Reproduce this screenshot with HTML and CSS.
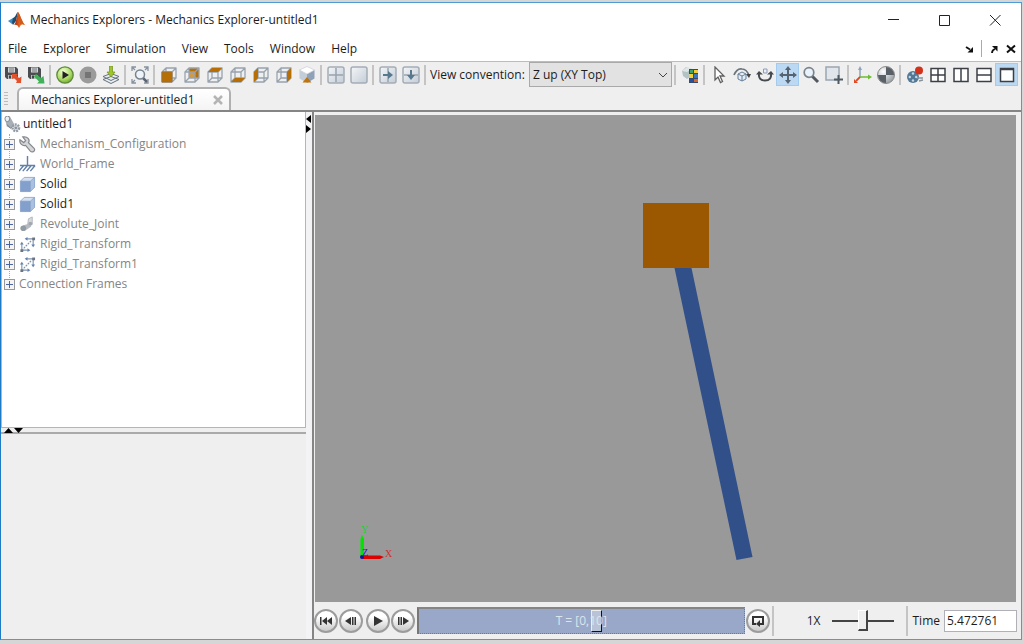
FILE: index.html
```html
<!DOCTYPE html>
<html lang="en">
<head>
<meta charset="utf-8">
<title>Mechanics Explorers - Mechanics Explorer-untitled1</title>
<link rel="stylesheet" href="styles.css">
</head>
<body>
<svg class="sprite" aria-hidden="true">
  <defs>
    <linearGradient id="g-blue" x1="0" y1="0" x2="1" y2="1"><stop offset="0" stop-color="#f4f6f8"/><stop offset="1" stop-color="#c3ccd6"/></linearGradient>
    <radialGradient id="g-green" cx=".4" cy=".3" r=".8"><stop offset="0" stop-color="#f4ffd8"/><stop offset=".6" stop-color="#a8d860"/><stop offset="1" stop-color="#5a9a20"/></radialGradient>
    <radialGradient id="g-ball" cx=".35" cy=".3" r=".8"><stop offset="0" stop-color="#ffffff"/><stop offset="1" stop-color="#8e959c"/></radialGradient>
    <linearGradient id="g-peak" x1="0" y1="0" x2="1" y2="0"><stop offset="0" stop-color="#8a1f10"/><stop offset=".5" stop-color="#e8641c"/><stop offset="1" stop-color="#f09a3a"/></linearGradient>
  </defs>
  <symbol id="disk" viewBox="0 0 18 18">
    <path d="M1 1h11l2 2v10H3l-2-2z" fill="#4b4d50"/><path d="M4 1.500h7v5H4z" fill="#d4d7da"/><path d="M5 3h5M5 5h5" stroke="#777"/><path d="M4 9h7v4H4z" fill="#b9bcc0"/><path d="M5 9.500h2v3H5z" fill="#444"/>
  </symbol>
  <symbol id="cube" viewBox="0 0 18 18">
    <path d="M2 6h10v10H2zM2 6l4-4h10v10l-4 4M12 6l4-4M6 2v10h10M6 12l-4 4" fill="none" stroke="#98a3ae" stroke-width="1.300" stroke-linejoin="round"/>
  </symbol>
  <symbol id="solid" viewBox="0 0 18 18">
    <path d="M1.500 5.500l4-4h11l-4.500 4z" fill="#d3e1f3"/><path d="M12 5.500l4.500-4v10.500l-4.500 4.500z" fill="#a9c0e0"/><path d="M1.500 5.500h10.500v11H1.500z" fill="#82a0cb"/><path d="M1.500 5.500h10.500v11H1.500zM1.500 5.500l4-4h11v10.500l-4.500 4.500M12 5.500l4.500-4" fill="none" stroke="#7f9bc4" stroke-width=".8"/>
  </symbol>
  <symbol id="pane" viewBox="0 0 18 18">
    <rect x="1" y="1" width="16" height="16" rx="2" fill="url(#g-blue)" stroke="#a4adb6" stroke-width="1.500"/>
  </symbol>
  <symbol id="transform" viewBox="0 0 18 18">
    <g fill="none" stroke="#7f93ad" stroke-width="1.200"><path d="M3 15V8M3 15h7M15 3v7M15 3H8"/><path d="M5 13l8-8" stroke-dasharray="2 1"/></g>
    <path d="M1.500 14h3v3h-3zM14 1.500h3v3h-3z" fill="#6a7683"/><path d="M1 9l2-3 2 3zM9 13l3 2-3 2zM9 1L6 3l3 2zM13 9l2 3 2-3z" fill="#6283b2"/>
  </symbol>
</svg>
<main class="window">
  <header class="titlebar">
    <svg class="logo" viewBox="0 0 18 18"><path d="M0 10l5-3 3 2-4 4z" fill="#3a8cc0"/><path d="M5 7c3-1 3-5 5-6L8 10l-3 4-1-2z" fill="#234c6c"/><path d="M10 1c2 2 4 10 7 13-3-1-4-1-6 3-1-3-3-4-5-3 2-1 3-10 4-13z" fill="url(#g-peak)"/><path d="M10 1c2 2 4 10 7 13-3-1-4-2-5 0z" fill="#d0591c"/></svg>
    <h1 class="title">Mechanics Explorers - Mechanics Explorer-untitled1</h1>
    <div class="window-controls">
      <button aria-label="Minimize"><svg viewBox="0 0 12 12"><path d="M1 5.500h11"/></svg></button>
      <button aria-label="Maximize"><svg viewBox="0 0 12 12"><path d="M1.500 1.500h10v10h-10z"/></svg></button>
      <button aria-label="Close"><svg viewBox="0 0 12 12"><path d="M1 1l10.500 10.500M11.500 1L1 11.500"/></svg></button>
    </div>
  </header>
  <nav class="menubar">
    <button>File</button><button>Explorer</button><button>Simulation</button><button>View</button><button>Tools</button><button>Window</button><button>Help</button>
    <div class="dock-controls">
      <button aria-label="Dock"><svg viewBox="0 0 10 10"><path d="M2 3l4 2.500" stroke="#111" stroke-width="1.800"/><path d="M9 3v5.500H3.500z" fill="#111"/></svg></button>
      <i></i>
      <button aria-label="Undock"><svg viewBox="0 0 10 10"><path d="M3 9q0-3 3-4" fill="none" stroke="#111" stroke-width="1.800"/><path d="M3 2h5.500v5.500z" fill="#111"/></svg></button>
      <button aria-label="Close explorer"><svg viewBox="0 0 10 10"><path d="M1 1.500l8 7M9 1.500l-8 7" stroke="#111" stroke-width="2"/></svg></button>
    </div>
  </nav>
  <div class="toolbar">
    <div class="tools">
      <button aria-label="Discard configuration"><svg viewBox="0 0 18 18"><use href="#disk"/><path d="M8 8h6l-1.500 1.500L15 12l2.500-1.500L17 17h-5l1-2-3-3-2 1z" fill="#e2502c"/></svg></button>
      <button aria-label="Save configuration"><svg viewBox="0 0 18 18"><use href="#disk"/><path d="M9 8l5 4 2.500-2 1 7.500H10l2-2-5-5z" fill="#43b15a"/></svg></button>
      <i></i>
      <button aria-label="Run"><svg viewBox="0 0 18 18"><circle cx="9" cy="9" r="8.200" fill="url(#g-green)" stroke="#5f8a3c" stroke-width="1.300"/><path d="M6.500 5l6.500 4-6.500 4z" fill="#222"/></svg></button>
      <button aria-label="Stop"><svg viewBox="0 0 18 18"><circle cx="9" cy="9" r="8.500" fill="#9b9b9b"/><path d="M6 6h6v6H6z" fill="#757575"/></svg></button>
      <button aria-label="Update"><svg viewBox="0 0 18 18"><path d="M1 13.500l8-3 8 3-8 4zM1 10.500l8-3 8 3-8 4z" fill="#e8edf2" stroke="#66717b"/><path d="M7.500 0h3v6H13l-4 5-4-5h2.500z" fill="#9fc52e" stroke="#6e8f1c" stroke-width=".7"/></svg></button>
      <i></i>
      <button aria-label="Fit to view"><svg viewBox="0 0 18 18"><path d="M1 5V1h4M13 1h4v4M1 13v4h4M13 17h4v-4M1 1l3 3M17 1l-3 3M1 17l3-3" fill="none" stroke="#8693a0" stroke-width="1.300"/><path d="M12 12l4 4" stroke="#5a6570" stroke-width="2.500"/><circle cx="9" cy="8.500" r="4.500" fill="#edf3f8" stroke="#78838d" stroke-width="1.500"/></svg></button>
      <i></i>
      <button aria-label="Front view"><svg viewBox="0 0 18 18"><use href="#cube"/><path d="M2 6h10v10H2z" fill="#b66e05" stroke="#a0702c"/></svg></button>
      <button aria-label="Back view"><svg viewBox="0 0 18 18"><path d="M6 2h10v10H6z" fill="#b66e05"/><path d="M6 6h6v6H6z" fill="#cf9a4c"/><use href="#cube"/></svg></button>
      <button aria-label="Top view"><svg viewBox="0 0 18 18"><use href="#cube"/><path d="M2 6l4-4h10l-4 4z" fill="#b66e05"/></svg></button>
      <button aria-label="Bottom view"><svg viewBox="0 0 18 18"><use href="#cube"/><path d="M2 16l4-4h10l-4 4z" fill="#b66e05"/></svg></button>
      <button aria-label="Left view"><svg viewBox="0 0 18 18"><use href="#cube"/><path d="M2 6l4-4v10l-4 4z" fill="#b66e05"/></svg></button>
      <button aria-label="Right view"><svg viewBox="0 0 18 18"><use href="#cube"/><path d="M12 6l4-4v10l-4 4z" fill="#b66e05"/></svg></button>
      <button aria-label="Isometric view"><svg viewBox="0 0 18 18"><path d="M1.500 4v8.500L9 17V8z" fill="#c3cdd8"/><path d="M16.500 4v8.500L9 17V8z" fill="#8fa2b8"/><path d="M9 .5L16.500 4 9 8 1.500 4z" fill="#fff" stroke="#c6cdd5" stroke-width=".7"/><path d="M9 11l4.500 5.500h-9z" fill="#c27408"/></svg></button>
      <i></i>
      <button aria-label="Four panes"><svg viewBox="0 0 18 18"><use href="#pane"/><path d="M9 2v14M2 9h14" stroke="#98a3ae" stroke-width="1.500"/></svg></button>
      <button aria-label="Single pane"><svg viewBox="0 0 18 18"><use href="#pane"/></svg></button>
      <i></i>
      <button aria-label="Split right"><svg viewBox="0 0 18 18"><use href="#pane"/><path d="M9 2v14" stroke="#9aa4ae" stroke-width="1.500"/><path d="M4 8h5V5l5 4-5 4v-3H4z" fill="#56798f"/></svg></button>
      <button aria-label="Split down"><svg viewBox="0 0 18 18"><use href="#pane"/><path d="M2 9h14" stroke="#9aa4ae" stroke-width="1.500"/><path d="M8 4v5H5l4 5 4-5h-3V4z" fill="#56798f"/></svg></button>
      <i></i>
    </div>
    <label class="convention-label" for="convention">View convention:</label>
    <select id="convention" class="convention"><option>Z up (XY Top)</option></select>
    <div class="tools tools-end">
      <i></i>
      <button aria-label="Visual properties"><svg viewBox="0 0 18 18"><path d="M1 5l4-4 6 2 1 6-6 4-4-3z" fill="#b3c2c5"/><path d="M1 5l5 1 5-3-5-2z" fill="#dfe6e6"/><path d="M8 3h9v14H8z" fill="#344b6e"/><path d="M9 4h3v3H9z" fill="#40a069"/><path d="M13 4h4v3h-4z" fill="#f0ce35"/><path d="M8 8h4v4H8z" fill="#f4cf36"/><path d="M13 8h4v4h-4z" fill="#3975bd"/><path d="M8 13h4v3H8z" fill="#2452a0"/><path d="M13 13h4v3h-4z" fill="#dd6428"/></svg></button>
      <i></i>
      <button aria-label="Select"><svg viewBox="0 0 18 18"><path d="M5 1v13l3-3 2.500 5.500 2-1L10 10h4z" fill="#fff" stroke="#606060" stroke-width="1.300"/></svg></button>
      <button aria-label="Rotate"><svg viewBox="0 0 18 18"><path d="M1 9Q4 2 9 3q5 0 7 7" fill="none" stroke="#6a747d" stroke-width="1.700"/><path d="M13 8h5l-2 4z" fill="#444"/><path d="M5 8l4-2 4 2v5l-4 2-4-2zM5 8l4 2 4-2M9 10v5" fill="#e2edf7" stroke="#647f9b"/></svg></button>
      <button aria-label="Roll"><svg viewBox="0 0 18 18"><path d="M3 7q-1 7.500 6 7.500T15 7" fill="none" stroke="#454a50" stroke-width="2"/><path d="M0 8.500L3 5l4 3.500zM11 8.500L15 5l3 3.500z" fill="#454a50"/><path d="M7.500 3h3.500v4H7.500z" fill="#e7eff9" stroke="#8c9db4"/></svg></button>
      <button class="active" aria-label="Pan"><svg viewBox="0 0 18 18"><path d="M9 2v14M2 9h14" stroke="#566472" stroke-width="2"/><path d="M9 0l3 4H6zM9 18l3-4H6zM0 9l4-3v6zM18 9l-4-3v6z" fill="#566472"/></svg></button>
      <button aria-label="Zoom"><svg viewBox="0 0 18 18"><path d="M10 10l6 6" stroke="#525960" stroke-width="3"/><circle cx="7" cy="6.500" r="4.800" fill="#eaf3fa" stroke="#7a848d" stroke-width="1.700"/></svg></button>
      <button aria-label="Zoom region"><svg viewBox="0 0 18 18"><path d="M1 1h13v13H1z" fill="#e1e6ec" stroke="#9aa6b2" stroke-width="1.500"/><path d="M13.500 9v9M9 13.500h9" stroke="#505a63" stroke-width="2"/></svg></button>
      <i></i>
      <button aria-label="Show frames"><svg viewBox="0 0 18 18"><path d="M6 2v9" stroke="#8fa1be" stroke-width="1.500"/><path d="M4 4l2-4 2 4z" fill="#8fa1be"/><path d="M6 11h9" stroke="#70bd35" stroke-width="1.500"/><path d="M14 8.500l4 2.500-4 2.500z" fill="#70bd35"/><path d="M6 11l-4 4" stroke="#df4a26" stroke-width="1.800"/><path d="M0 13l4 4H0z" fill="#df4a26"/></svg></button>
      <button aria-label="Center of mass"><svg viewBox="0 0 18 18"><circle cx="9" cy="9" r="8.500" fill="url(#g-ball)" stroke="#888"/><path d="M9 1a8 8 0 0 1 8 8H9zM9 9v8a8 8 0 0 1-8-8z" fill="#5a6067"/></svg></button>
      <i></i>
      <button aria-label="Record video"><svg viewBox="0 0 18 18"><circle cx="7" cy="11" r="6" fill="#547997"/><path d="M11 12h6M13 15l4-1" stroke="#87939c" stroke-width="1.500"/><g fill="#c5d7e4"><circle cx="7" cy="7.500" r="1.200"/><circle cx="3.800" cy="11" r="1.200"/><circle cx="10.200" cy="11" r="1.200"/><circle cx="7" cy="14.500" r="1.200"/></g><circle cx="13" cy="4.500" r="4" fill="#d3321a"/></svg></button>
      <button aria-label="Four views"><svg class="lay" viewBox="0 0 18 18"><path d="M2 2.500h14v13H2zM9 2.500v13M2 9h14"/></svg></button>
      <button aria-label="Two columns"><svg class="lay" viewBox="0 0 18 18"><path d="M2 2.500h14v13H2zM9 2.500v13"/></svg></button>
      <button aria-label="Two rows"><svg class="lay" viewBox="0 0 18 18"><path d="M2 2.500h14v13H2zM2 9h14"/></svg></button>
      <button class="active" aria-label="One view"><svg class="lay" viewBox="0 0 18 18"><path d="M2.500 2.500h13v13h-13zM2 3.500h14"/></svg></button>
    </div>
  </div>
  <div class="tabs">
    <span class="grip"></span>
    <div class="tab"><span>Mechanics Explorer-untitled1</span><button aria-label="Close tab"><svg viewBox="0 0 10 10"><path d="M1 1l8 8M9 1L1 9" stroke="#b4b4b4" stroke-width="2.500"/></svg></button></div>
  </div>
  <div class="workspace">
    <aside class="sidebar">
      <div class="tree">
        <div class="root"><svg viewBox="0 0 18 18"><path d="M1 3l5-3 5 9-4 4-4-2z" fill="#a8afb6"/><ellipse cx="3.500" cy="3" rx="2.500" ry="3" fill="#edf0f2" stroke="#7c868f"/><path d="M3 9l4 4 3-3" fill="none" stroke="#69737d"/><circle cx="12.500" cy="12.500" r="3.500" fill="#dce0e4" stroke="#929ba4" stroke-width="2.500" stroke-dasharray="2 1"/><circle cx="12.500" cy="12.500" r="1.500" fill="#8b96a0"/></svg>untitled1</div>
        <ul class="nodes">
          <li class="dim"><button class="expand" aria-label="Expand Mechanism_Configuration"></button><svg viewBox="0 0 18 18"><path d="M1 4l4 3 2-2-3-4c5-1 8 3 6 6l6 6c2 3-2 5-4 3l-5-6C4 11 0 8 1 4z" fill="#d4d6d8" stroke="#85898d" stroke-width="1.300"/></svg>Mechanism_Configuration</li>
          <li class="dim"><button class="expand" aria-label="Expand World_Frame"></button><svg viewBox="0 0 18 18"><path d="M9 0v10M1 10h16M5 10l-5 6M9 10l-5 6M13 10l-5 6M17 10l-5 6" stroke="#6280a8" stroke-width="1.500"/></svg>World_Frame</li>
          <li><button class="expand" aria-label="Expand Solid"></button><svg viewBox="0 0 18 18"><use href="#solid"/></svg>Solid</li>
          <li><button class="expand" aria-label="Expand Solid1"></button><svg viewBox="0 0 18 18"><use href="#solid"/></svg>Solid1</li>
          <li class="dim"><button class="expand" aria-label="Expand Revolute_Joint"></button><svg viewBox="0 0 18 18"><path d="M10 3l4-2v8l-5 2z" fill="#d7dadd" stroke="#b0b5ba"/><path d="M4 10l7-2 2 3-7 5z" fill="#b5bbc1"/><circle cx="4.500" cy="13" r="3" fill="#929aa2"/><circle cx="12" cy="8" r="2" fill="#a1a8ae"/></svg>Revolute_Joint</li>
          <li class="dim"><button class="expand" aria-label="Expand Rigid_Transform"></button><svg viewBox="0 0 18 18"><use href="#transform"/></svg>Rigid_Transform</li>
          <li class="dim"><button class="expand" aria-label="Expand Rigid_Transform1"></button><svg viewBox="0 0 18 18"><use href="#transform"/></svg>Rigid_Transform1</li>
          <li class="dim plain"><button class="expand" aria-label="Expand Connection Frames"></button>Connection Frames</li>
        </ul>
      </div>
      <div class="hsplit"><svg viewBox="0 0 20 6"><path d="M0 5l4.500-5L9 5zM10 0h9l-4.500 5z"/></svg></div>
      <div class="properties"></div>
    </aside>
    <div class="vsplit"><svg viewBox="0 0 6 18"><path d="M5 0v8L0 4zM0 10v8l5-4z"/></svg></div>
    <section class="viewer">
      <svg class="scene" viewBox="0 0 701 487" role="img" aria-label="Pendulum model">
        <path d="M359.500 153H376.500L437.500 442 421.500 445z" fill="#31508a"/>
        <path d="M328 88h66v65h-66z" fill="#9c5800"/>
        <path d="M45.500 442V424l1.500-4 2 4v18z" fill="#00e400"/><path d="M49 440.500h16l4 1.500-4 2H47z" fill="#dc0000"/><circle cx="47" cy="442" r="2" fill="#1111a0"/>
        <g class="axis"><text x="46" y="418" fill="#20d030">Y</text><text x="70" y="442" fill="#d03030">X</text><text x="47" y="441" fill="#2222d0">Z</text></g>
      </svg>
      <div class="playback">
        <button class="round" aria-label="Go to start"><svg viewBox="0 0 16 16"><path d="M2 4h1.500v8H2zM9 4v8L4 8zM14 4v8L9 8z"/></svg></button>
        <button class="round" aria-label="Step back"><svg viewBox="0 0 16 16"><path d="M8 4v8L2 8zM9 4h1.500v8H9zM11.500 4H13v8h-1.500z"/></svg></button>
        <button class="round play" aria-label="Play"><svg viewBox="0 0 16 16"><path d="M4 3l9 5-9 5z"/></svg></button>
        <button class="round" aria-label="Step forward"><svg viewBox="0 0 16 16"><path d="M3 4h1.500v8H3zM5.500 4H7v8H5.500zM8 4v8l6-4z"/></svg></button>
        <div class="timeline"><input type="range" min="0" max="10" step="any" value="5.472761" aria-label="Simulation time"><span>T = [0,10]</span></div>
        <button class="round" aria-label="Loop"><svg viewBox="0 0 16 16"><path d="M6 11H3V4h10v7h-3" fill="none" stroke="#333" stroke-width="2"/><path d="M10 7v7l-4-3z"/></svg></button>
        <div class="speed"><label for="speed">1X</label><input id="speed" type="range"></div>
        <div class="time"><label for="time">Time</label><input id="time" type="text" value="5.472761"></div>
      </div>
    </section>
  </div>
</main>
</body>
</html>
```
FILE: styles.css
```css
* { box-sizing: border-box; }
body {
  margin: 0;
  height: 100vh;
  padding: 2px 2px 4px 0;
  background: #d6d6d6;
  font: 12px/20px "Open Sans", "Noto Sans", sans-serif;
  color: #1c1c1c;
}
button { border: 0; padding: 0; background: none; font: inherit; color: inherit; }
.sprite { position: absolute; width: 0; height: 0; }
.window {
  height: 100%;
  display: flex;
  flex-direction: column;
  background: #efefef;
  border: 1px solid #4f9bd6;
  border-left-color: #1f7ac4;
}
.titlebar { display: flex; align-items: center; height: 33px; background: #fff; padding: 0 1px 0 7px; }
.logo { width: 18px; height: 18px; margin-right: 4px; }
.title { margin: 0; font-size: 12px; font-weight: 400; white-space: nowrap; }
.window-controls { display: flex; margin-left: auto; }
.window-controls button { width: 51px; height: 30px; display: grid; place-items: center; }
.window-controls svg { width: 12px; height: 12px; fill: none; stroke: #222; }
.menubar { display: flex; align-items: center; height: 26px; background: #fff; padding-left: 7px; gap: 16px; border-bottom: 1px solid #bdbdbd; }
.dock-controls { display: flex; align-items: center; margin-left: auto; gap: 7px; padding-right: 5px; }
.dock-controls button { display: grid; }
.dock-controls svg { width: 10px; height: 10px; }
.dock-controls i { width: 1px; height: 17px; background: #aaa; }
.toolbar { display: flex; align-items: center; height: 25px; padding-right: 3px; }
.tools { display: flex; align-items: center; }
.tools-end { margin-left: 0; }
.tools button { width: 23px; height: 23px; display: grid; place-items: center; }
.tools svg { width: 18px; height: 18px; }
.tools i { width: 2px; height: 20px; margin: 0 2px; background: #c4c4c4; }
.tools .active { background: #bcd9f3; border: 1px solid #a2cbee; }
.tools .lay { fill: #fff; stroke: #3c4046; stroke-width: 1.5; }
.convention-label { margin-left: 2px; white-space: nowrap; }
.convention {
  width: 143px;
  height: 25px;
  margin-left: auto;
  padding: 0 3px;
  border: 1px solid #a9a9a9;
  border-radius: 0;
  appearance: none;
  font: inherit;
  color: inherit;
  background: #e2e2e2 url("data:image/svg+xml,%3Csvg xmlns='http://www.w3.org/2000/svg' width='9' height='6'%3E%3Cpath d='M0 1l4 4 4-4' fill='none' stroke='%23444'/%3E%3C/svg%3E") no-repeat right 3px center;
}
.tabs { display: flex; align-items: flex-end; height: 25px; border-bottom: 2px solid #858585; }
.grip { width: 4px; height: 14px; margin: 0 9px 4px 3px; background: repeating-linear-gradient(#bbb 0 1px, #eee 1px 3px); }
.tab {
  display: flex;
  align-items: center;
  gap: 18px;
  height: 23px;
  padding: 0 6px 0 12px;
  border: 2px solid #b0b0b0;
  border-bottom: 0;
  border-radius: 6px 6px 0 0;
  background: linear-gradient(#fff, #f4f4f4);
  white-space: nowrap;
}
.tab svg { display: block; width: 10px; height: 10px; }
.workspace { flex: 1; min-height: 0; display: flex; }
.sidebar { flex: 0 0 305px; display: flex; flex-direction: column; }
.tree { flex: 315; min-height: 0; background: #fff; border: 1px solid #b4b4ba; border-top: 0; padding-top: 2px; }
.root { display: flex; align-items: center; height: 20px; gap: 2px; padding-left: 2px; }
.tree svg { width: 17px; height: 17px; flex: none; }
.nodes { position: relative; list-style: none; margin: 0; padding: 0; }
.nodes::before { content: ""; position: absolute; left: 7px; top: 0; bottom: 10px; border-left: 1px dotted #aaa; }
.nodes li { display: flex; align-items: center; height: 20px; padding-left: 2px; gap: 4px; }
.dim { color: #858585; }
.expand {
  position: relative;
  width: 11px;
  height: 11px;
  border: 1px solid #999;
  background: linear-gradient(#4c64a8, #4c64a8) center / 7px 1px no-repeat, linear-gradient(#4c64a8, #4c64a8) center / 1px 7px no-repeat, #f4f4f4;
}
.hsplit { height: 6px; border-bottom: 2px solid #aaa; }
.hsplit svg { display: block; width: 20px; height: 6px; margin-left: 3px; overflow: visible; }
.properties { flex: 206; }
.vsplit { width: 6px; padding-top: 3px; background: #f3f3f5; }
.vsplit svg { display: block; width: 6px; height: 18px; }
.viewer { flex: 1; min-width: 0; display: flex; flex-direction: column; border-left: 2px solid #858585; }
.scene { display: block; flex: 1; min-height: 0; margin: 3px 5px 0 1px; background: #999; }
.axis { font: 10px "Liberation Serif", serif; }
.playback { flex: none; display: flex; align-items: center; height: 37px; }
.round {
  width: 24px;
  height: 24px;
  flex: none;
  display: grid;
  place-items: center;
  margin-right: 1px;
  border: 2px solid #9c9c9c;
  border-radius: 50%;
  background: linear-gradient(#fff 30%, #c9c9c9);
}
.round svg { width: 16px; height: 16px; fill: #333; }
.play { margin-left: 2px; }
.timeline { position: relative; flex: 1; height: 27px; margin: 0 1px; border: 1px dotted #777; border-top: 2px solid #858585; border-left: 2px solid #777; background: #99a8c9; }
.timeline span { position: absolute; inset: 0; display: grid; place-items: center; color: #dbe5ec; pointer-events: none; }
.timeline input { display: block; width: 100%; height: 100%; margin: 0; appearance: none; background: none; }
.timeline input::-webkit-slider-thumb { appearance: none; width: 11px; height: 22px; background: #b9c3d8; border: 1px solid #eee; border-right-color: #111; border-bottom-color: #111; }
.speed { display: flex; align-items: center; justify-content: flex-end; gap: 11px; width: 136px; height: 30px; margin-left: 1px; padding-right: 12px; border-left: 2px solid #c4c4c4; border-right: 2px solid #c4c4c4; }
.speed input { width: 62px; height: 22px; margin: 0; appearance: none; background: linear-gradient(#444, #444) center / 100% 2px no-repeat; }
.speed input::-webkit-slider-thumb { appearance: none; width: 10px; height: 21px; background: #efefef; border: 1px solid #fff; border-right: 2px solid #444; border-bottom: 2px solid #444; }
.time { display: flex; align-items: center; gap: 4px; padding: 0 4px 0 5px; }
.time input { width: 73px; height: 22px; padding: 0 2px; border: 1px solid #b0b0b8; background: #fff; font: inherit; color: inherit; }
```
